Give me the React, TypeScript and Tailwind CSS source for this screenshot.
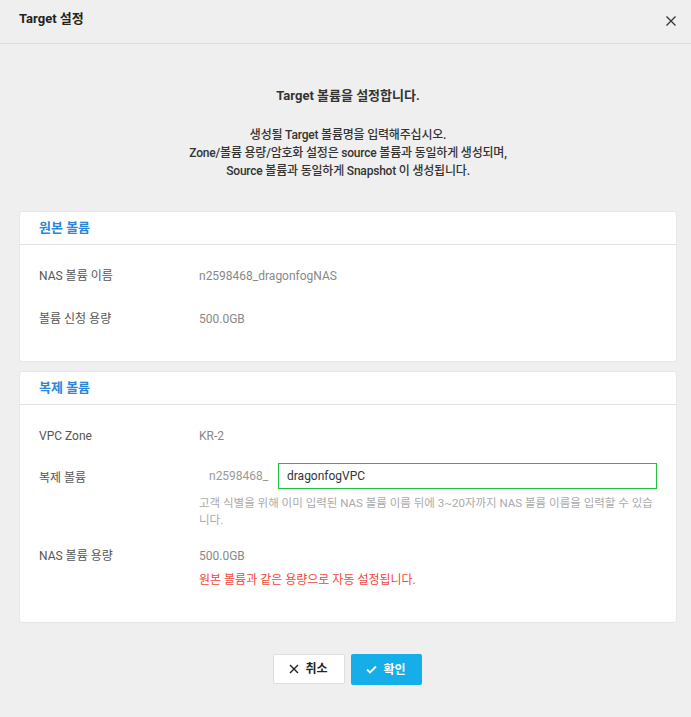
import React from 'react';

const font = { fontFamily: 'Roboto, "Noto Sans CJK KR", sans-serif' };

const Row = ({ label, children }: { label: string; children: React.ReactNode }) => (
    <div className="flex min-h-[43px] items-center">
        <div className="w-[160px] shrink-0 text-[12px] text-[#555]">{label}</div>
        <div className="flex-1 text-[12px] text-[#888]">{children}</div>
    </div>
);

const App = () => {
    return (
        <div className="min-h-[717px] w-[691px] bg-[#efefef]" style={font}>
            {/* header */}
            <div className="flex h-[44px] items-start justify-between border-b border-[#dcdcdc] pl-[19px] pr-[14px]">
                <span className="pt-[10px] text-[13px] font-bold leading-[18px] text-[#222]">Target 설정</span>
                <svg width="12" height="12" viewBox="0 0 12 12" className="mt-[15px]">
                    <path d="M1.5 1.5 L10.5 10.5 M10.5 1.5 L1.5 10.5" stroke="#333" strokeWidth="1.3" />
                </svg>
            </div>

            <div className="pl-[19px] pr-[14px] pt-[43px]">
                <div className="text-center text-[13px] font-bold leading-[18px] text-[#333]">
                    Target 볼륨을 설정합니다.
                </div>
                <div className="mt-[21px] text-center text-[12px] font-medium leading-[18px] tracking-[-0.2px] text-[#333]">
                    <div>생성될 Target 볼륨명을 입력해주십시오.</div>
                    <div>Zone/볼륨 용량/암호화 설정은 source 볼륨과 동일하게 생성되며,</div>
                    <div>Source 볼륨과 동일하게 Snapshot 이 생성됩니다.</div>
                </div>

                {/* 원본 볼륨 */}
                <div className="mt-[31px] rounded-[3px] border border-[#e6e6e6] bg-white">
                    <div className="flex h-[33px] items-center border-b border-[#e3e3e3] px-[19px] text-[13px] font-bold text-[#2a86d9]">
                        원본 볼륨
                    </div>
                    <div className="px-[19px] pb-[21px] pt-[9px]">
                        <Row label="NAS 볼륨 이름">n2598468_dragonfogNAS</Row>
                        <Row label="볼륨 신청 용량">500.0GB</Row>
                    </div>
                </div>

                {/* 복제 볼륨 */}
                <div className="mt-[9px] rounded-[3px] border border-[#e6e6e6] bg-white">
                    <div className="flex h-[33px] items-center border-b border-[#e3e3e3] px-[19px] text-[13px] font-bold text-[#2a86d9]">
                        복제 볼륨
                    </div>
                    <div className="px-[19px] pb-[33px] pt-[9px]">
                        <Row label="VPC Zone">KR-2</Row>
                        <div className="mt-[6px] flex">
                            <div className="w-[160px] shrink-0 pt-[6px] text-[12px] text-[#555]">복제 볼륨</div>
                            <div className="flex-1">
                                <div className="flex items-center">
                                    <span className="w-[79px] pl-[10px] text-[12px] text-[#999]">n2598468_</span>
                                    <div className="flex h-[26px] flex-1 items-center border border-[#1ec23f] px-[8px] text-[12px] text-[#333]">
                                        dragonfogVPC
                                    </div>
                                </div>
                                <div className="mt-[6px] break-all text-[11.5px] leading-[17px] text-[#aaa]">
                                    고객 식별을 위해 이미 입력된 NAS 볼륨 이름 뒤에 3~20자까지 NAS 볼륨 이름을 입력할 수 있습니다.
                                </div>
                            </div>
                        </div>
                        <div className="mt-[18px] flex">
                            <div className="w-[160px] shrink-0 text-[12px] leading-[18px] text-[#555]">NAS 볼륨 용량</div>
                            <div className="flex-1">
                                <div className="text-[12px] leading-[18px] text-[#888]">500.0GB</div>
                                <div className="mt-[6px] text-[12px] leading-[18px] text-[#f2473b]">
                                    원본 볼륨과 같은 용량으로 자동 설정됩니다.
                                </div>
                            </div>
                        </div>
                    </div>
                </div>

                {/* buttons */}
                <div className="mt-[31px] flex justify-center gap-[6px] pr-[2px]">
                    <button className="flex h-[30px] w-[72px] items-center justify-center gap-[6px] rounded-[2px] border border-[#dedede] bg-white text-[12px] font-bold text-[#222]">
                        <svg width="10" height="10" viewBox="0 0 10 10">
                            <path d="M1 1 L9 9 M9 1 L1 9" stroke="#222" strokeWidth="1.4" />
                        </svg>
                        취소
                    </button>
                    <button className="flex h-[31px] w-[71px] items-center justify-center gap-[6px] rounded-[2px] bg-[#16aee8] text-[12px] font-bold text-white">
                        <svg width="11" height="9" viewBox="0 0 11 9">
                            <path d="M1 4.5 L4 7.5 L10 1.5" stroke="#fff" strokeWidth="1.8" fill="none" />
                        </svg>
                        확인
                    </button>
                </div>
            </div>
        </div>
    );
};

export default App;
